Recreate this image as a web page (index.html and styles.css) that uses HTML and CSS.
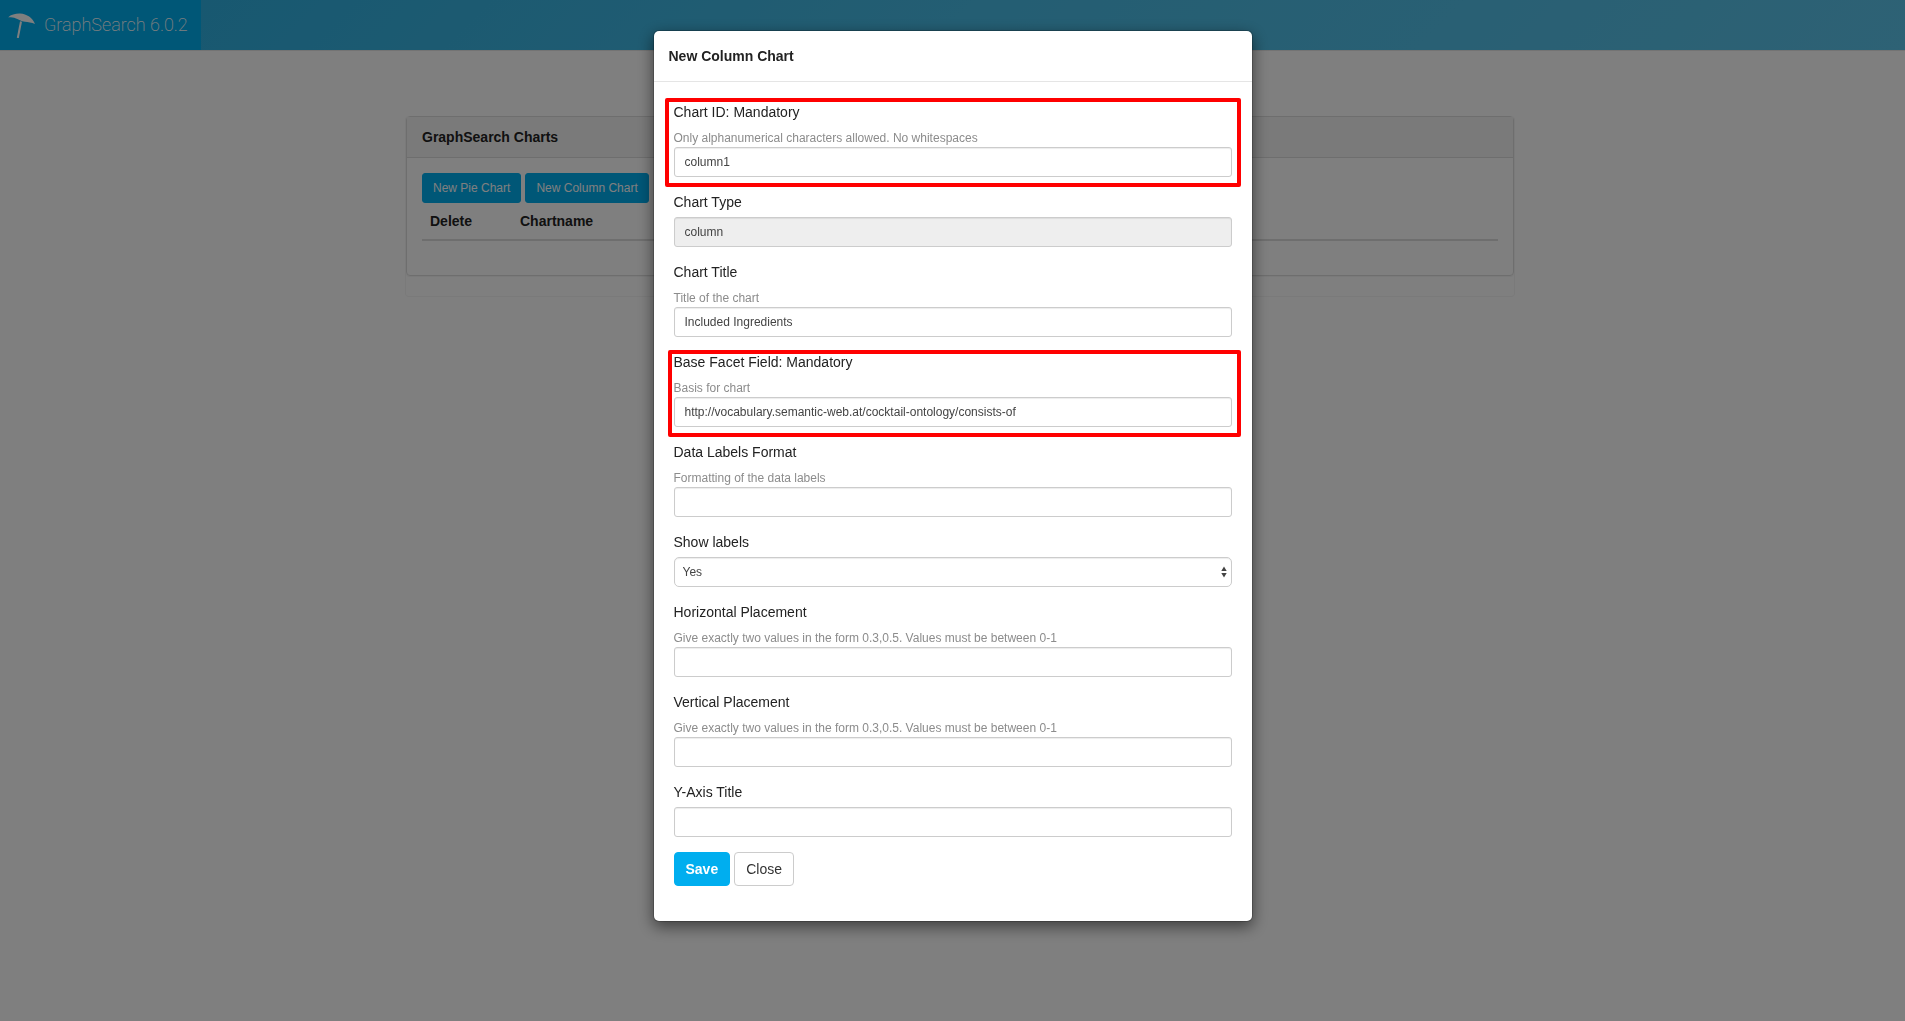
FILE: index.html
```html
<!DOCTYPE html>
<html lang="en">
<head>
    <meta charset="UTF-8">
    <meta name="viewport" content="width=device-width, initial-scale=1.0">
    <title>GraphSearch Charts</title>
    <link rel="stylesheet" href="styles.css">
</head>
<body>
    <header class="navbar">
        <a class="brand" href="#">
            <svg class="brand-icon" viewBox="0 0 28 26" aria-hidden="true">
                <path d="M0 5.4C3 2.6 7.5 1.5 12 1.6C19 2 24.5 6 27 12C23.5 10.6 20 10.2 17 9.8C13 9.4 10.5 7.6 8 6.6C5 5.4 2.5 5.3 0 5.4Z" fill="currentColor"/>
                <path d="M13 9.5L9.8 26" stroke="currentColor" stroke-width="2" fill="none"/>
            </svg>
            <span>GraphSearch 6.0.2</span>
        </a>
    </header>

    <main class="page">
        <div class="wrapper">
            <section class="panel">
                <h1 class="panel-heading">GraphSearch Charts</h1>
                <div class="panel-body">
                    <div class="toolbar">
                        <button type="button" class="btn btn-primary btn-sm">New Pie Chart</button>
                        <button type="button" class="btn btn-primary btn-sm">New Column Chart</button>
                    </div>
                    <table class="charts">
                        <thead>
                            <tr>
                                <th class="col-delete">Delete</th>
                                <th>Chartname</th>
                            </tr>
                        </thead>
                    </table>
                </div>
            </section>
        </div>
    </main>

    <div class="modal">
        <div class="modal-content" role="dialog" aria-labelledby="modalTitle">
            <div class="modal-header">
                <h2 class="modal-title" id="modalTitle">New Column Chart</h2>
            </div>
            <form class="modal-body">
                <div class="form-group mandatory">
                    <label for="chartId">Chart ID: Mandatory</label>
                    <p class="help">Only alphanumerical characters allowed. No whitespaces</p>
                    <input type="text" class="form-control" id="chartId" value="column1">
                </div>
                <div class="form-group">
                    <label for="chartType">Chart Type</label>
                    <input type="text" class="form-control" id="chartType" value="column" readonly>
                </div>
                <div class="form-group">
                    <label for="chartTitle">Chart Title</label>
                    <p class="help">Title of the chart</p>
                    <input type="text" class="form-control" id="chartTitle" value="Included Ingredients">
                </div>
                <div class="form-group mandatory mandatory-facet">
                    <label for="facetField">Base Facet Field: Mandatory</label>
                    <p class="help">Basis for chart</p>
                    <input type="text" class="form-control" id="facetField" value="http://vocabulary.semantic-web.at/cocktail-ontology/consists-of">
                </div>
                <div class="form-group">
                    <label for="labelsFormat">Data Labels Format</label>
                    <p class="help">Formatting of the data labels</p>
                    <input type="text" class="form-control" id="labelsFormat">
                </div>
                <div class="form-group">
                    <label for="showLabels">Show labels</label>
                    <div class="select-wrap">
                        <select class="form-control" id="showLabels">
                            <option>Yes</option>
                        </select>
                        <svg class="select-arrows" viewBox="0 0 6 12" aria-hidden="true">
                            <path d="M3 0.5L5.7 5H0.3ZM3 11.5L0.3 7H5.7Z" fill="#444"/>
                        </svg>
                    </div>
                </div>
                <div class="form-group">
                    <label for="horizontal">Horizontal Placement</label>
                    <p class="help">Give exactly two values in the form 0.3,0.5. Values must be between 0-1</p>
                    <input type="text" class="form-control" id="horizontal">
                </div>
                <div class="form-group">
                    <label for="vertical">Vertical Placement</label>
                    <p class="help">Give exactly two values in the form 0.3,0.5. Values must be between 0-1</p>
                    <input type="text" class="form-control" id="vertical">
                </div>
                <div class="form-group">
                    <label for="yAxis">Y-Axis Title</label>
                    <input type="text" class="form-control" id="yAxis">
                </div>
                <div class="form-group actions">
                    <button type="button" class="btn btn-primary btn-save">Save</button>
                    <button type="button" class="btn btn-default">Close</button>
                </div>
            </form>
        </div>
    </div>
</body>
</html>
```
FILE: styles.css
```css
* {
    box-sizing: border-box;
}
body {
    margin: 0;
    font-family: "Helvetica Neue", Helvetica, "Liberation Sans", Arial, sans-serif;
    font-size: 14px;
    line-height: 20px;
    color: #222;
    background: #fff;
}
.navbar {
    display: flex;
    height: 51px;
    background: linear-gradient(135deg, #2aaee0 0%, #48bce6 50%, #5cc4ea 100%);
    border-bottom: 1px solid #e7e7e7;
}
.brand {
    display: flex;
    align-items: center;
    gap: 8px;
    padding: 0 13px 0 8px;
    background: #00aeef;
    color: #fff;
    font-family: Roboto, sans-serif;
    font-size: 18px;
    font-weight: 200;
    text-decoration: none;
}
.brand-icon {
    width: 28px;
    height: 26px;
}

/* charts panel */
.page {
    padding: 65px 0 0 15px;
}
.wrapper {
    max-width: 1110px;
    margin: 0 auto;
    padding-bottom: 20px;
    border: 1px solid #f5f5f5;
    border-top: 0;
    border-radius: 4px;
}
.panel {
    border: 1px solid #ddd;
    border-radius: 4px;
    box-shadow: 0 1px 1px rgba(0, 0, 0, 0.05);
}
.panel-heading {
    margin: 0;
    padding: 10px 15px;
    font-size: 14px;
    background: #f5f5f5;
    border-bottom: 1px solid #ddd;
}
.panel-body {
    padding: 15px;
}
.toolbar {
    display: flex;
    gap: 4px;
}
.charts {
    width: 100%;
    margin-bottom: 19px;
    border-collapse: collapse;
}
.charts th {
    padding: 8px;
    text-align: left;
    border-bottom: 2px solid #ddd;
}
.col-delete {
    width: 90px;
}

/* buttons */
.btn {
    padding: 6px 11px;
    font-family: inherit;
    font-size: 14px;
    line-height: 20px;
    border: 1px solid transparent;
    border-radius: 4px;
    cursor: pointer;
}
.btn-sm {
    padding: 5px 10px;
    font-size: 12px;
    line-height: 18px;
    border-radius: 3px;
}
.btn-primary {
    color: #fff;
    background: #00aeef;
    border-color: #00aeef;
}
.btn-default {
    color: #333;
    background: #fff;
    border-color: #ccc;
}
.btn-save {
    font-weight: bold;
}

/* dialog */
.modal {
    position: fixed;
    inset: 0;
    padding: 30px 10px;
    overflow: auto;
    background: rgba(0, 0, 0, 0.5);
}
.modal-content {
    max-width: 600px;
    margin: 0 auto;
    background: #fff;
    background-clip: padding-box;
    border: 1px solid rgba(0, 0, 0, 0.2);
    border-radius: 6px;
    box-shadow: 0 5px 15px rgba(0, 0, 0, 0.5);
}
.modal-header {
    padding: 15px;
    border-bottom: 1px solid #e5e5e5;
}
.modal-title {
    margin: 0;
    font-size: 14px;
    line-height: 20px;
}
.modal-body {
    padding: 20px;
}
.form-group {
    margin-bottom: 15px;
}
.form-group label {
    display: block;
    margin-bottom: 5px;
}
.help {
    margin: 0;
    padding-top: 2px;
    font-size: 12px;
    line-height: 18px;
    color: #8c8c8c;
}
.form-control {
    display: block;
    width: 100%;
    height: 30px;
    padding: 5px 10px;
    font-family: inherit;
    font-size: 12px;
    line-height: 18px;
    color: #444;
    background: #fff;
    border: 1px solid #ccc;
    border-radius: 3px;
    box-shadow: inset 0 1px 1px rgba(0, 0, 0, 0.075);
}
.form-control[readonly] {
    background: #eee;
}
.select-wrap {
    position: relative;
}
.select-wrap .form-control {
    padding: 5px 8px;
    border-radius: 5px;
    appearance: none;
}
.select-arrows {
    position: absolute;
    top: 9px;
    right: 5px;
    width: 6px;
    height: 12px;
    pointer-events: none;
}
.actions {
    display: flex;
    gap: 4px;
}

/* red frame around the mandatory fields */
.mandatory {
    position: relative;
}
.mandatory::after {
    content: "";
    position: absolute;
    inset: -4px -9px -10px -9px;
    border: 4px solid #f00;
    border-radius: 2px;
    pointer-events: none;
}
.mandatory-facet::after {
    inset: -2px -9px -10px -6px;
}
```
